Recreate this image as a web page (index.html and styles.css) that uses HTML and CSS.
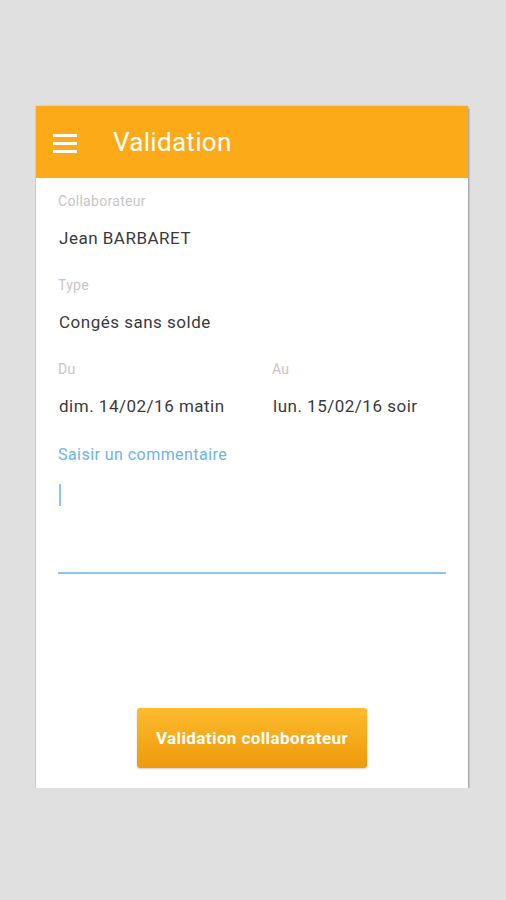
FILE: index.html
```
<!DOCTYPE html>
<html lang="fr">
<head>
    <meta charset="UTF-8">
    <meta name="viewport" content="width=device-width, initial-scale=1.0">
    <title>Validation</title>
    <link rel="stylesheet" href="styles.css">
</head>
<body>
    <div class="card">
        <header class="toolbar">
            <span class="menu-icon">
                <svg width="24" height="19" viewBox="0 0 24 19">
                    <rect x="0" y="0" width="24" height="3" fill="#fff"/>
                    <rect x="0" y="8" width="24" height="3" fill="#fff"/>
                    <rect x="0" y="16" width="24" height="3" fill="#fff"/>
                </svg>
            </span>
            <h1>Validation</h1>
        </header>

        <div class="content">
            <div class="field">
                <div class="label">Collaborateur</div>
                <div class="value">Jean BARBARET</div>
            </div>

            <div class="field">
                <div class="label">Type</div>
                <div class="value">Congés sans solde</div>
            </div>

            <div class="field-row">
                <div class="field">
                    <div class="label">Du</div>
                    <div class="value">dim. 14/02/16 matin</div>
                </div>
                <div class="field">
                    <div class="label">Au</div>
                    <div class="value">lun. 15/02/16 soir</div>
                </div>
            </div>

            <div class="comment">
                <div class="comment-label">Saisir un commentaire</div>
                <div class="comment-input">
                    <span class="cursor"></span>
                </div>
            </div>

            <button type="button" class="validate-btn">Validation collaborateur</button>
        </div>
    </div>
</body>
</html>
```

FILE: styles.css
```
body {
    font-family: Roboto, "Liberation Sans", sans-serif;
    margin: 0;
    padding: 106px 0 0 36px;
    background-color: #e0e0e0;
}

.card {
    width: 432px;
    height: 682px;
    background: #fff;
    display: flex;
    flex-direction: column;
    box-shadow: 0 0 2px rgba(0, 0, 0, 0.15), 1px 2px 2px rgba(0, 0, 0, 0.3);
}

.toolbar {
    height: 72px;
    background-color: #fcaa18;
    display: flex;
    align-items: center;
    padding-left: 17px;
    box-sizing: border-box;
}

.menu-icon {
    display: flex;
    width: 24px;
    height: 19px;
    margin-top: 3px;
}

.toolbar h1 {
    margin: 0 0 0 36px;
    font-size: 26px;
    font-weight: normal;
    letter-spacing: 0.3px;
    color: #fff;
}

.content {
    flex: 1;
    display: flex;
    flex-direction: column;
    padding: 13px 22px 20px;
}

.field {
    margin-bottom: 25px;
}

.label {
    font-size: 14px;
    line-height: 20px;
    letter-spacing: 0.3px;
    color: #c6c6c6;
}

.value {
    margin-top: 15px;
    font-size: 17px;
    line-height: 24px;
    letter-spacing: 0.5px;
    color: #3a3a3a;
    padding-left: 1px;
}

.field-row {
    display: flex;
}

.field-row .field {
    flex: 1;
}

.field-row .field:first-child {
    flex: 0 0 214px;
}

.comment {
    margin-top: 1px;
}

.comment-label {
    font-size: 16px;
    line-height: 22px;
    letter-spacing: 0.45px;
    color: #6db3ec;
}

.comment-input {
    height: 108px;
    border-bottom: 2px solid #8ec4ee;
    padding-top: 18px;
    box-sizing: border-box;
}

.cursor {
    display: block;
    width: 2px;
    height: 22px;
    margin-left: 1px;
    background-color: #8ec4ee;
}

.validate-btn {
    margin: auto auto 0;
    width: 230px;
    height: 60px;
    border: none;
    border-radius: 3px;
    background: linear-gradient(#fcbb2d, #ee9a0b);
    box-shadow: 0 1px 2px rgba(0, 0, 0, 0.2);
    color: #fff;
    font-family: Roboto, "Liberation Sans", sans-serif;
    font-size: 17px;
    font-weight: bold;
    letter-spacing: 0.4px;
    cursor: pointer;
}
```
